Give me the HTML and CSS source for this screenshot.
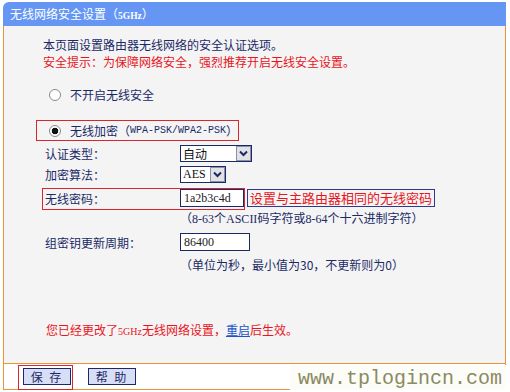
FILE: index.html
```html
<!DOCTYPE html>
<html lang="zh-CN">
<head>
    <meta charset="UTF-8">
    <title>无线网络安全设置</title>
    <link rel="stylesheet" href="styles.css">
</head>
<body>
    <div class="wrap">
        <div class="head">无线网络安全设置（<b class="en t5g">5GHz</b>）</div>

        <div class="panel">
            <p class="intro">本页面设置路由器无线网络的安全认证选项。<br><span class="warn">安全提示：为保障网络安全，强烈推荐开启无线安全设置。</span></p>

            <div class="opt"><span class="radio"></span>不开启无线安全</div>
            <div class="opt opt2 marked"><span class="radio on"></span>无线加密（<span class="mono">WPA-PSK/WPA2-PSK</span>）</div>

            <div class="row r-auth">
                <span class="lbl">认证类型：</span>
                <span class="sel s-auth">自动<i class="arr"><svg width="9" height="7" viewBox="0 0 9 7"><path d="M1 1.5 L4.5 5 L8 1.5" stroke="#1b2a66" stroke-width="2" fill="none"/></svg></i></span>
            </div>
            <div class="row r-algo">
                <span class="lbl">加密算法：</span>
                <span class="sel s-algo"><span class="en">AES</span><i class="arr"><svg width="9" height="7" viewBox="0 0 9 7"><path d="M1 1.5 L4.5 5 L8 1.5" stroke="#1b2a66" stroke-width="2" fill="none"/></svg></i></span>
            </div>

            <div class="pwd">
                <div class="pwdbox">
                    <span class="lbl">无线密码：</span>
                    <span class="inp w64">1a2b3c4d</span>
                </div>
                <div class="tip">设置与主路由器相同的无线密码</div>
            </div>
            <div class="hint">（<span class="en">8-63</span>个<span class="en">ASCII</span>码字符或<span class="en">8-64</span>个十六进制字符）</div>

            <div class="row r-group">
                <span class="lbl">组密钥更新周期：</span>
                <span class="inp w70">86400</span>
            </div>
            <div class="hint hint2">（单位为秒，最小值为30，不更新则为0）</div>

            <p class="notice">您已经更改了<span class="en n5g">5GHz</span>无线网络设置，<a href="#" class="reboot">重启</a>后生效。</p>
        </div>

        <div class="foot">
            <div class="savebox"><button class="btn">保&nbsp;存</button></div>
            <button class="btn help">帮&nbsp;助</button>
        </div>

        <div class="mark">www.tplogincn.com</div>
    </div>
</body>
</html>
```

FILE: styles.css
```css
body {
    margin: 0;
    font-family: "Noto Sans CJK SC", sans-serif;
    font-size: 12px;
    color: #1b2a66;
    background: #fff;
}
.wrap {
    position: relative;
    width: 503px;
    margin: 2px 0 0 3px;
}
.head {
    height: 24px;
    line-height: 24px;
    padding-left: 7px;
    background: #6596f4;
    color: #fff;
    border-top-left-radius: 6px;
}
.en {
    font-family: "Liberation Serif", serif;
}
.t5g {
    font-size: 9.5px;
}
.panel {
    background: #f4f4f4;
    border: 1px solid #e8953a;
    border-top: 0;
    padding: 10px 0 22px;
}
.intro {
    margin: 0 0 0 39px;
    line-height: 17px;
}
.warn {
    color: #e8141e;
}

/* radio options */
.opt {
    display: flex;
    align-items: center;
    width: max-content;
    height: 19px;
    margin: 14px 0 0 32px;
    padding-left: 12px;
    border: 1px solid transparent;
}
.opt2 {
    margin-top: 15px;
}
.marked {
    border-color: #d8262c;
}
.radio {
    width: 12px;
    height: 12px;
    box-sizing: border-box;
    margin-right: 9px;
    border: 1px solid #8a8a8a;
    border-radius: 50%;
    background: #fff;
}
.radio.on {
    background: radial-gradient(circle, #111 0 3px, #fff 3.6px);
}
.mono {
    font-family: "Liberation Mono", monospace;
    font-size: 10px;
}

/* form rows */
.row {
    display: flex;
    align-items: center;
    height: 20px;
    margin-left: 41px;
}
.r-auth { margin-top: 2px; }
.r-algo { margin-top: 1px; }
.r-group { margin-top: 6px; }
.lbl {
    width: 135px;
}
.sel {
    display: flex;
    align-items: center;
    height: 17px;
    box-sizing: border-box;
    padding-left: 2px;
    border: 1px solid #1b2a66;
    background: #fff;
    color: #111;
}
.s-auth { width: 72px; }
.s-algo { width: 46px; }
.arr {
    display: flex;
    align-items: center;
    justify-content: center;
    width: 15px;
    height: 15px;
    box-sizing: border-box;
    margin-left: auto;
    border: 1px solid #8890b0;
    background: #e2e2e2;
}
.inp {
    height: 18px;
    box-sizing: border-box;
    padding-left: 3px;
    border: 1px solid #1b2a66;
    background: #fff;
    color: #222;
    font-family: "Liberation Serif", serif;
    line-height: 16px;
}
.w64 { width: 64px; }
.w70 { width: 70px; }

.pwd {
    display: flex;
    align-items: flex-start;
    margin: 4px 0 0 38px;
}
.pwdbox {
    display: flex;
    height: 20px;
    padding-left: 2px;
    border: 1px solid #d8262c;
}
.pwdbox .lbl {
    line-height: 20px;
}
.tip {
    height: 18px;
    box-sizing: border-box;
    margin: 1px 0 0 2px;
    padding: 0 2px;
    border: 1px solid #2c3a8f;
    color: #e8141e;
    font-size: 13px;
    line-height: 16px;
}
.hint {
    height: 16px;
    line-height: 16px;
    margin-left: 176px;
}
.hint2 {
    height: 18px;
    line-height: 18px;
    margin-top: 4px;
}
.notice {
    margin: 47px 0 0 42px;
    line-height: 18px;
    color: #e8141e;
}
.n5g {
    font-size: 10px;
}
.reboot {
    color: #1a56c8;
}

/* buttons */
.foot {
    display: flex;
    align-items: flex-start;
    height: 25px;
    padding-left: 14px;
    border: 1px solid #e8953a;
    border-top: 0;
    background: #fff;
}
.savebox {
    margin-top: 1px;
    padding: 2px 1px 4px 4px;
    border: 1px solid #d8262c;
}
.btn {
    display: block;
    width: 48px;
    height: 17px;
    padding: 0;
    border: 1px solid #1b2a66;
    background: #d8def6;
    color: #1b2a66;
    font-family: inherit;
    font-size: 12px;
    line-height: 15px;
    letter-spacing: 2px;
}
.help {
    margin: 4px 0 0 15px;
}

/* site watermark over the corner */
.mark {
    position: absolute;
    left: 287px;
    top: 363px;
    width: 208px;
    height: 27px;
    padding-left: 8px;
    background: #fcfcf8;
    color: #8b8a62;
    font-family: "Liberation Mono", monospace;
    font-size: 20px;
    line-height: 27px;
}
```
